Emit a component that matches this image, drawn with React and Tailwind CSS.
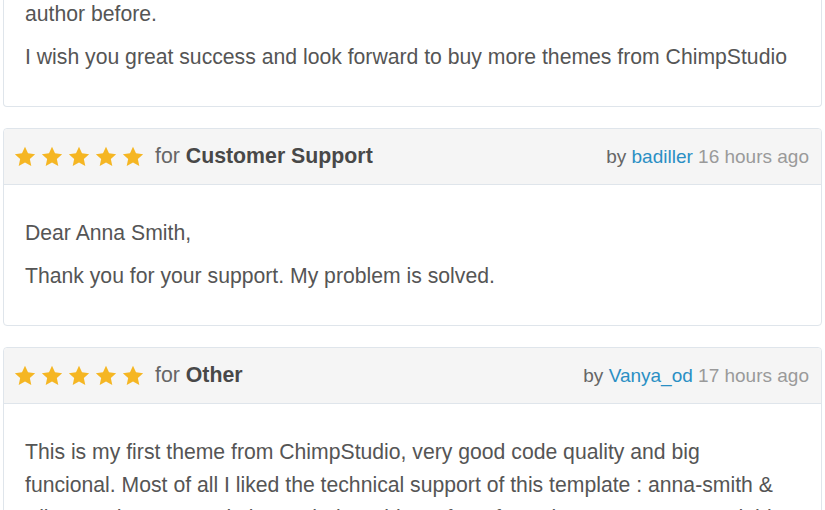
import React from 'react';

function Star() {
  return (
    <svg width="22" height="21" viewBox="0 0 24 23" className="shrink-0">
      <path
        d="M12 0.8l3.3 7.2 7.8 0.9-5.8 5.3 1.6 7.7L12 18l-6.9 3.9 1.6-7.7L0.9 8.9l7.8-0.9z"
        fill="#f5b623"
      />
    </svg>
  );
}

function ReviewHeader({ topic, author, time }) {
  return (
    <div className="h-[56px] bg-[#f5f5f5] border-b border-[#dfe5eb] rounded-t-[4px] flex items-center justify-between pl-[10px] pr-[12px]">
      <div className="flex items-center">
        <div className="flex items-center gap-[5px]">
          {[0, 1, 2, 3, 4].map((i) => (
            <Star key={i} />
          ))}
        </div>
        <span className="ml-[11px] text-[21.3px] text-[#666]">
          for <b className="font-bold text-[#484848]">{topic}</b>
        </span>
      </div>
      <div className="text-[19px] text-[#666]">
        by <span className="text-[#2a8fc4]">{author}</span>{' '}
        <span className="text-[#9a9a9a]">{time}</span>
      </div>
    </div>
  );
}

function ReviewCard({ topic, author, time, children }) {
  return (
    <div className="border border-[#dfe5eb] rounded-[4px] bg-white">
      <ReviewHeader topic={topic} author={author} time={time} />
      <div className="px-[21px] pt-[31px] pb-[23px]">{children}</div>
    </div>
  );
}

export default function App() {
  return (
    <div className="w-[825px] h-[510px] overflow-hidden bg-white text-[#555] text-[21.2px] leading-[33px] font-['Liberation_Sans',Arial,sans-serif]">
      <div className="mx-[3px] flex flex-col gap-[21px] -mt-[3px]">
        <div className="border border-t-0 border-[#dfe5eb] rounded-b-[4px] bg-white px-[21px] pb-[23px]">
          <p className="mb-[10px]">author before.</p>
          <p className="mb-[10px]">
            I wish you great success and look forward to buy more themes from ChimpStudio
          </p>
        </div>

        <ReviewCard topic="Customer Support" author="badiller" time="16 hours ago">
          <p className="mb-[10px]">Dear Anna Smith,</p>
          <p className="mb-[10px]">Thank you for your support. My problem is solved.</p>
        </ReviewCard>

        <ReviewCard topic="Other" author="Vanya_od" time="17 hours ago">
          <p className="mb-[10px]">
            This is my first theme from ChimpStudio, very good code quality and big
            <br />
            funcional. Most of all I liked the technical support of this template : anna-smith &amp;
            <br />
            Alina Fred ! I get a solution to their problems for a few minutes. I recommend this
          </p>
        </ReviewCard>
      </div>
    </div>
  );
}
